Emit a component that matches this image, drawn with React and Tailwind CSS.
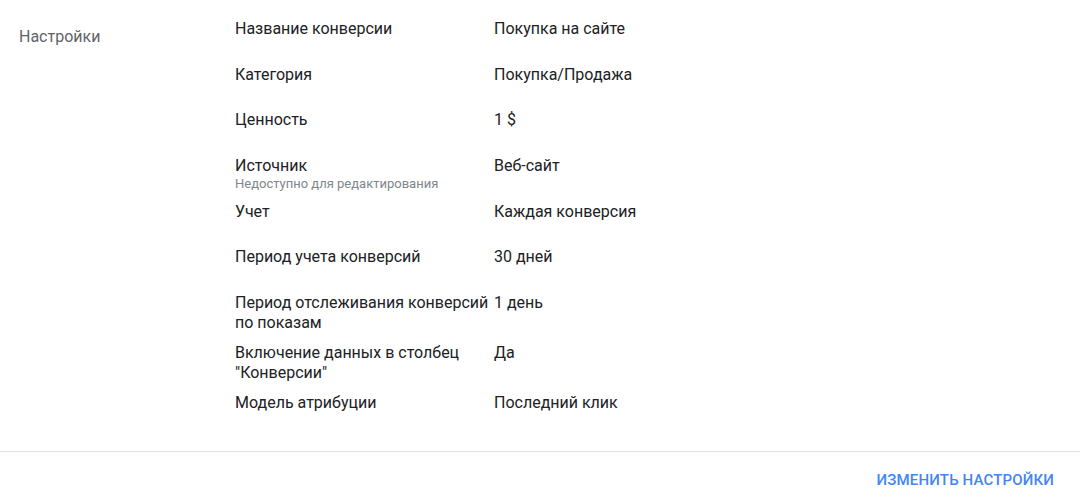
const rows = [
  { label: 'Название конверсии', value: 'Покупка на сайте' },
  { label: 'Категория', value: 'Покупка/Продажа' },
  { label: 'Ценность', value: '1 $' },
  { label: 'Источник', sub: 'Недоступно для редактирования', value: 'Веб-сайт' },
  { label: 'Учет', value: 'Каждая конверсия' },
  { label: 'Период учета конверсий', value: '30 дней' },
  { label: 'Период отслеживания конверсий по показам', value: '1 день' },
  { label: 'Включение данных в столбец "Конверсии"', value: 'Да' },
  { label: 'Модель атрибуции', value: 'Последний клик' },
]

export default function App() {
  return (
    <div className="w-[1080px] h-[501px] bg-white font-['Roboto',sans-serif] text-[16px] text-[#202124]">
      <div className="flex pt-[19px] pb-[13px] border-b border-[#e3e3e3]">
        <div className="w-[235px] shrink-0 pl-[19px] pt-[8px] leading-5 text-[#5f6368]">
          Настройки
        </div>
        <div className="flex flex-col">
          {rows.map((r) => (
            <div key={r.label} className="flex min-h-[45.5px] pb-[10px]">
              <div className="w-[259px] shrink-0 pr-1 leading-5">
                <div>{r.label}</div>
                {r.sub && (
                  <div className="text-[13px] leading-4 text-[#80868b]">{r.sub}</div>
                )}
              </div>
              <div className="leading-5">{r.value}</div>
            </div>
          ))}
        </div>
      </div>
      <div className="flex justify-end pr-[26px] pt-[18px]">
        <button className="font-medium text-[15px] leading-5 text-[#4285f4] uppercase tracking-[0.15px]">
          Изменить настройки
        </button>
      </div>
    </div>
  )
}
